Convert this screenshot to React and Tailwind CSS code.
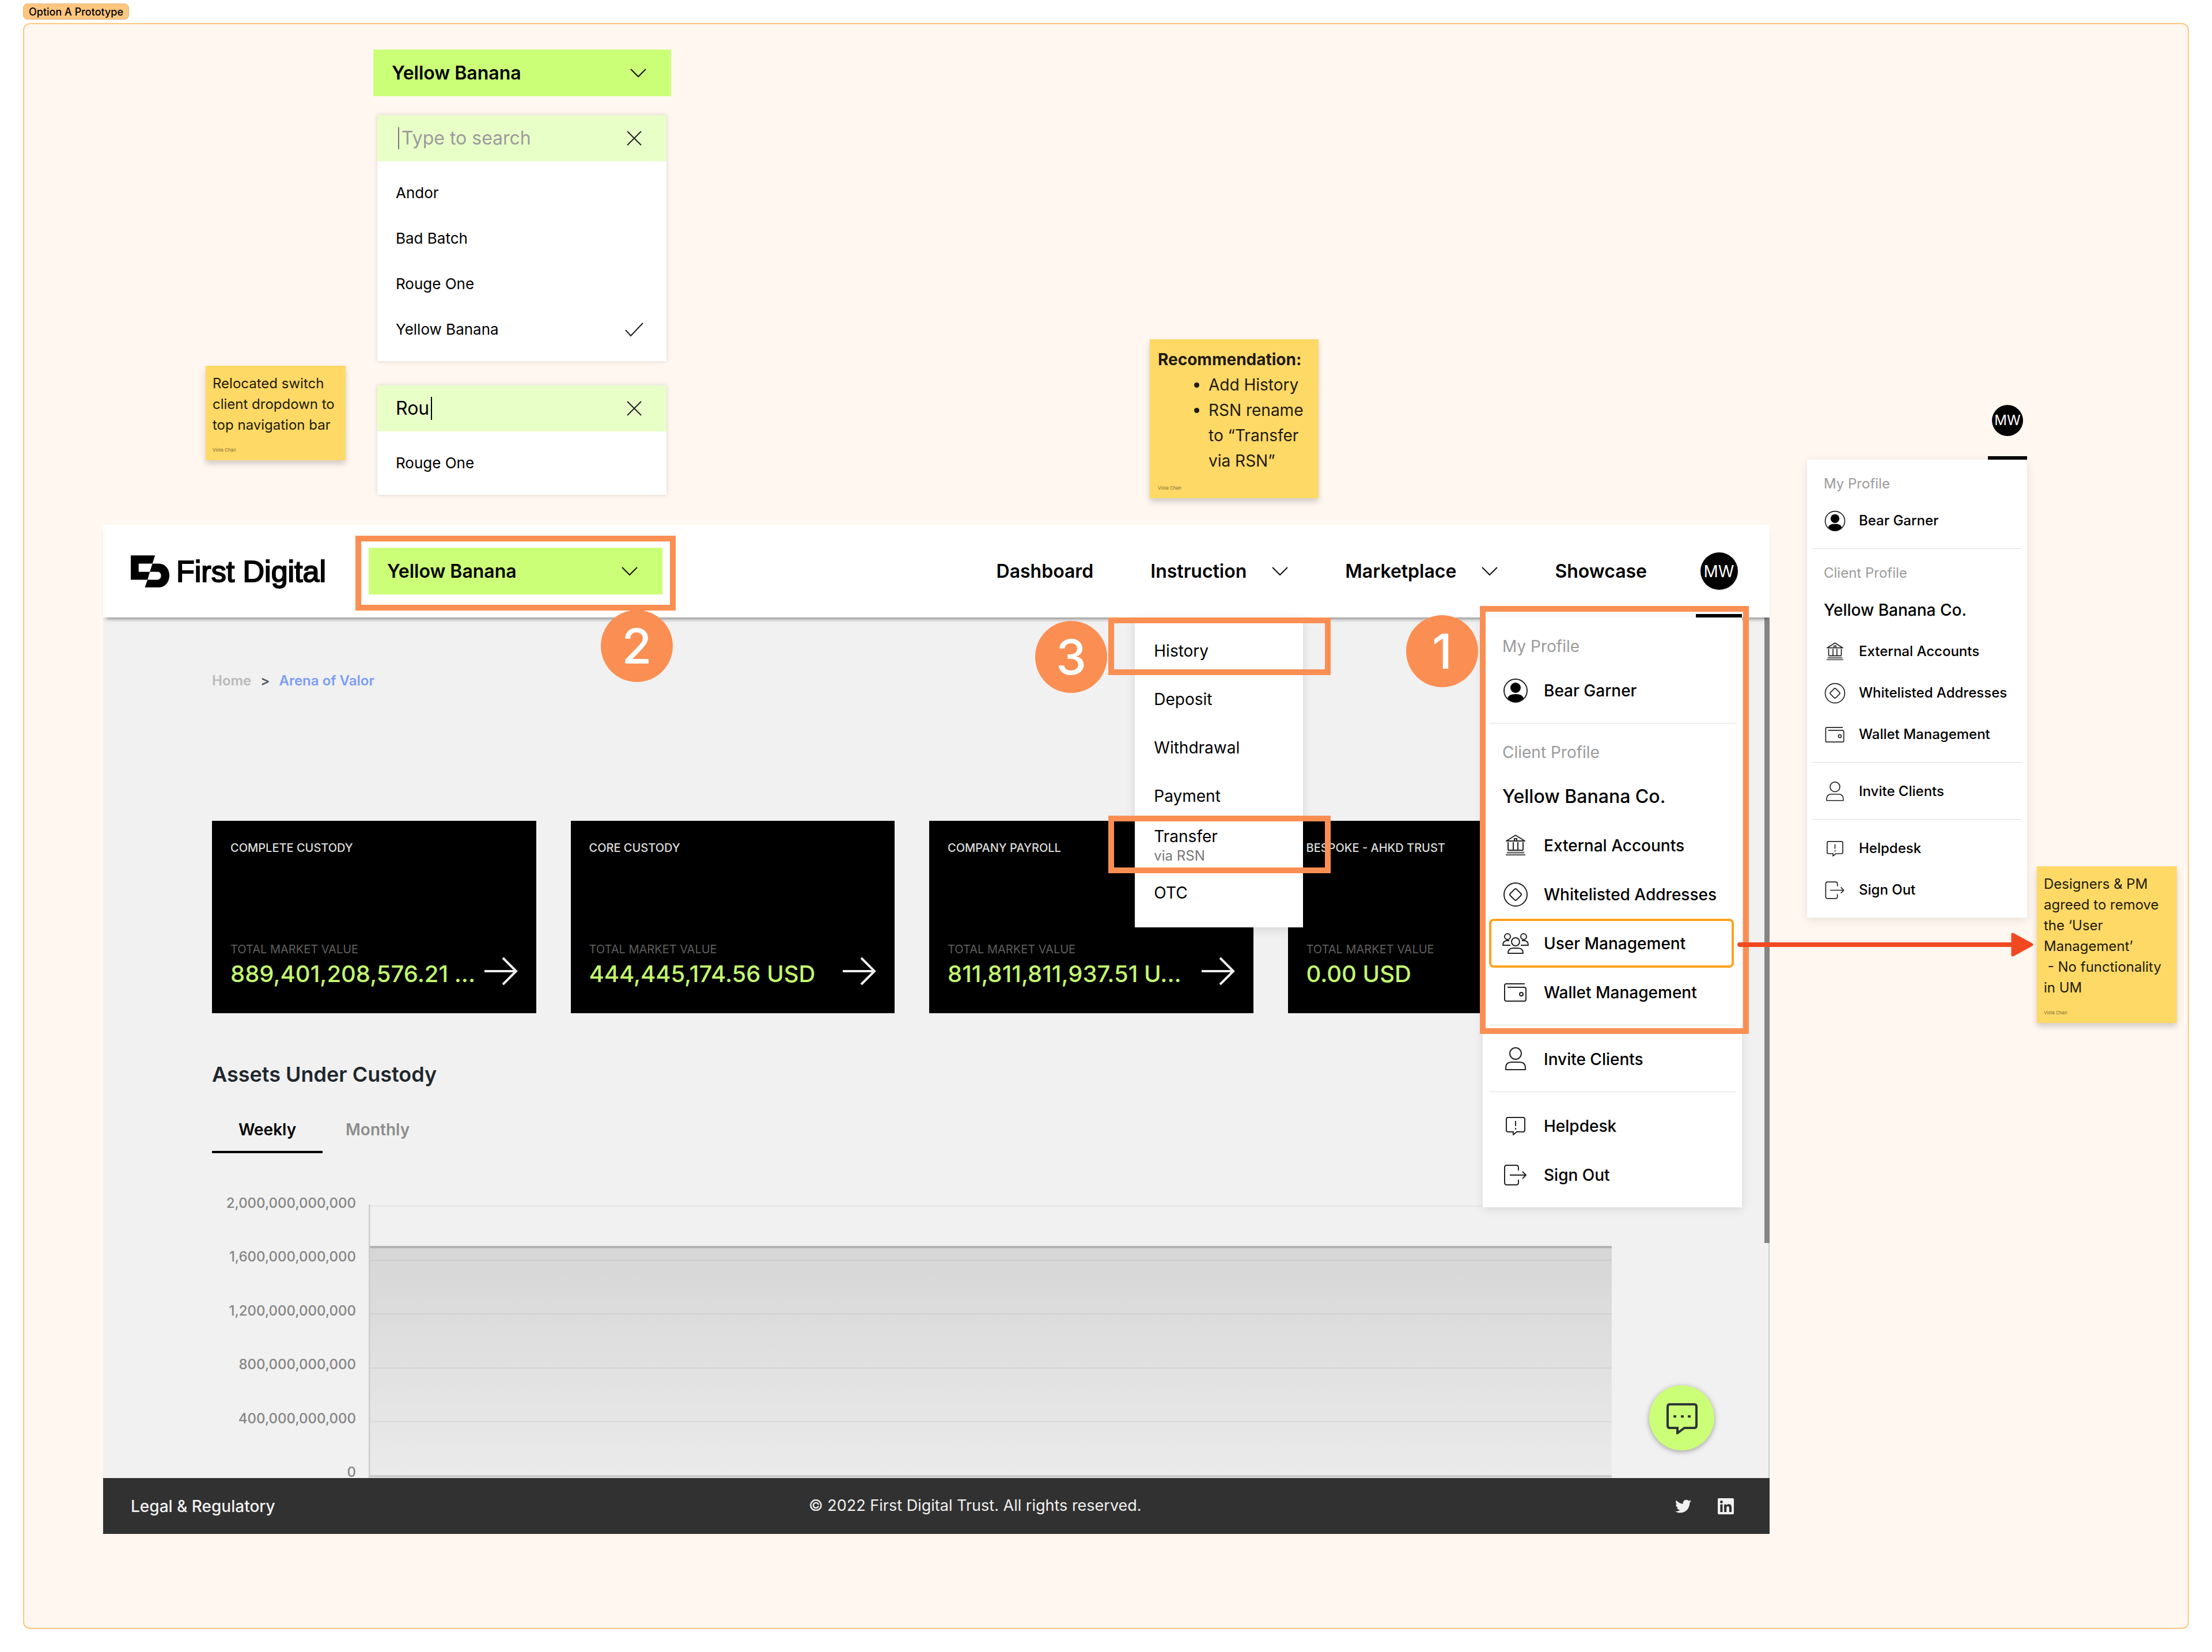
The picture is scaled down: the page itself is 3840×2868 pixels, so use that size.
import React, { useState } from "react";
import { FaLinkedin, FaTwitter } from "react-icons/fa";

const clients = ["Andor", "Bad Batch", "Rouge One", "Yellow Banana"];

const instructions = [
  { label: "History", marked: true },
  { label: "Deposit" },
  { label: "Withdrawal" },
  { label: "Payment" },
  { label: "Transfer", note: "via RSN", marked: true },
  { label: "OTC" },
];

const accounts = [
  { name: "COMPLETE CUSTODY", value: "889,401,208,576.21 ..." },
  { name: "CORE CUSTODY", value: "444,445,174.56 USD" },
  { name: "COMPANY PAYROLL", value: "811,811,811,937.51 U..." },
  { name: "BESPOKE - AHKD TRUST", value: "0.00 USD" },
];

const axisLabels = [
  "2,000,000,000,000",
  "1,600,000,000,000",
  "1,200,000,000,000",
  "800,000,000,000",
  "400,000,000,000",
  "0",
];

export default function App() {
  return (
    <div className="flex min-h-screen flex-col bg-white px-[40px] pt-[6px] pb-[40px] font-['Inter',sans-serif] text-black">
      <div className="mb-[6px] flex h-[28px] items-center self-start rounded-lg border border-[#e5b27a] bg-[#ffc680] px-[9px] text-[18px] font-medium">
        Option A Prototype
      </div>

      <section className="relative flex-1 overflow-hidden rounded-xl border-2 border-[#ffc680] bg-[#fff7f0]">
        <div className="absolute top-[44px] left-[606px] w-[517px]">
          <ClientSelect />
        </div>
        <div className="absolute top-[158px] left-[613px] w-[502px]">
          <ClientSearch />
        </div>
        <div className="absolute top-[627px] left-[613px] w-[502px]">
          <ClientSearch initialQuery="Rou" />
        </div>

        <div className="absolute top-[593px] left-[315px]">
          <StickyNote className="w-[243px] px-[12px] pt-[13px] text-[24px] leading-[36px]">
            <p>Relocated switch client dropdown to top navigation bar</p>
          </StickyNote>
        </div>

        <div className="absolute top-[547px] left-[1954px]">
          <StickyNote className="w-[293px] px-[14px] pt-[13px] text-[28px] leading-[44px]">
            <p className="font-bold">Recommendation:</p>
            <ul className="list-disc pl-[88px]">
              <li>Add History</li>
              <li>RSN rename to “Transfer via RSN”</li>
            </ul>
          </StickyNote>
        </div>

        <div className="absolute top-[869px] left-[137px] w-[2893px]">
          <Dashboard />
        </div>

        <StepBadge className="top-[1017px] left-[1001px]">2</StepBadge>
        <StepBadge className="top-[1036px] left-[1755px]">3</StepBadge>
        <StepBadge className="top-[1026px] left-[2399px]">1</StepBadge>

        <div className="absolute top-[661px] left-[3095px] flex w-[382px] flex-col items-end">
          <div className="flex w-[68px] flex-col items-center">
            <Avatar className="size-[54px] text-[24px]" />
            <div className="mt-[35px] h-[6px] w-full bg-black" />
          </div>
          <ProfileMenu compact />
        </div>

        <div className="absolute top-[1462px] left-[3494px]">
          <StickyNote className="w-[243px] px-[12px] pt-[13px] text-[24px] leading-[36px]">
            <p className="whitespace-pre-line">
              {"Designers & PM agreed to remove the ‘User Management’\n\u00a0- No functionality in UM"}
            </p>
          </StickyNote>
        </div>

        <svg className="absolute top-[1573px] left-[2970px] z-20 h-[50px] w-[520px]" viewBox="0 0 520 50" fill="none">
          <path d="M8 25H484" stroke="#f24822" strokeWidth="8" strokeLinecap="round" />
          <path d="M482 7L515 25L482 43Z" fill="#f24822" stroke="#f24822" strokeWidth="5" strokeLinejoin="round" />
        </svg>
      </section>
    </div>
  );
}

function ClientSelect() {
  return (
    <div className="relative h-[81px] w-full">
      <select
        aria-label="Client"
        defaultValue="Yellow Banana"
        className="h-full w-full appearance-none bg-[#ccff78] pr-[80px] pl-[32px] text-[32px] font-semibold"
      >
        {clients.map((client) => (
          <option key={client}>{client}</option>
        ))}
      </select>
      <Chevron className="pointer-events-none absolute top-[32px] right-[43px]" />
    </div>
  );
}

function ClientSearch({ initialQuery = "" }) {
  const [query, setQuery] = useState(initialQuery);
  const matches = clients.filter((client) => client.toLowerCase().includes(query.toLowerCase()));

  return (
    <div className="bg-white shadow-[0_0_8px_rgba(0,0,0,0.15)]">
      <div className="flex h-[80px] items-center bg-[#e9ffc8] pr-[42px] pl-[32px] text-[32px]">
        {!query && <span className="mr-[4px] ml-[4px] h-[38px] w-[2px] bg-[#777777]" />}
        <input
          type="text"
          aria-label="Search clients"
          value={query}
          onChange={(event) => setQuery(event.target.value)}
          placeholder="Type to search"
          className="field-sizing-content bg-transparent placeholder-[#9b9b9b] outline-none"
        />
        {query && <span className="ml-[3px] h-[40px] w-[2px] bg-black" />}
        <button type="button" aria-label="Clear search" onClick={() => setQuery("")} className="ml-auto">
          <svg className="size-[28px]" viewBox="0 0 28 28" fill="none" stroke="#222" strokeWidth="2">
            <path d="M2 2L26 26M26 2L2 26" />
          </svg>
        </button>
      </div>
      <ul className="pt-[15px] pb-[16px] text-[26px]">
        {matches.map((client) => (
          <li key={client} className="flex h-[79px] items-center justify-between pr-[39px] pl-[32px]">
            {client}
            {client === "Yellow Banana" && (
              <svg className="h-[26px] w-[34px]" viewBox="0 0 34 26" fill="none" stroke="#222" strokeWidth="2">
                <path d="M2 14L11 24L32 2" />
              </svg>
            )}
          </li>
        ))}
      </ul>
    </div>
  );
}

function StickyNote({ className, children }) {
  return (
    <div className={`bg-[#ffd966] text-[#1e1a0c] shadow-[0_6px_10px_rgba(0,0,0,0.18)] ${className}`}>
      {children}
      <p className="mt-[20px] pb-[13px] text-[8px] leading-[10px] text-[#7d6c38]">Viola Chan</p>
    </div>
  );
}

function StepBadge({ className, children }) {
  return (
    <div
      className={`absolute z-20 flex size-[125px] items-center justify-center rounded-full bg-[#fb8f53] text-[84px] font-medium text-white ${className}`}
    >
      {children}
    </div>
  );
}

function Avatar({ className }) {
  return (
    <div className={`flex items-center justify-center rounded-full bg-black text-white ${className}`}>MW</div>
  );
}

function Chevron({ className = "" }) {
  return (
    <svg className={`h-[17px] w-[28px] ${className}`} viewBox="0 0 28 17" fill="none" stroke="#111" strokeWidth="2">
      <path d="M1 2L14 15L27 2" />
    </svg>
  );
}

function Dashboard() {
  return (
    <div className="relative">
      <header className="relative z-10 flex h-[161px] items-center bg-white pr-[48px] pl-[48px] shadow-[0_7px_7px_-5px_rgba(0,0,0,0.5)]">
        <a href="#home" className="flex items-center">
          <svg className="mr-[12px] h-[56px] w-[67px]" viewBox="0 0 200 166">
            <path d="M0 0H126L112 43H41V85H99L87 126H0Z" />
            <path d="M112 43H146C178 43 200 70 200 104C200 138 178 166 146 166H73L87 126H138C150 126 157 117 157 105C157 93 150 85 138 85H99Z" />
          </svg>
          <span className="font-['Liberation_Sans',sans-serif] text-[52px] [-webkit-text-stroke:2px_black]">
            First Digital
          </span>
        </a>

        <div className="relative ml-[74px] w-[510px]">
          <ClientSelect />
          <div className="pointer-events-none absolute -inset-x-[23px] -top-[21px] -bottom-[28px] border-[10px] border-[#fb8f53]" />
        </div>

        <nav className="ml-auto flex items-center gap-[99px] self-stretch text-[32px] font-semibold">
          <a href="#dashboard">Dashboard</a>
          <div className="relative flex items-center self-stretch">
            <button type="button" className="flex items-center gap-[44px]">
              Instruction
              <Chevron />
            </button>
            <InstructionMenu />
          </div>
          <button type="button" className="flex items-center gap-[44px]">
            Marketplace
            <Chevron />
          </button>
          <a href="#showcase">Showcase</a>
        </nav>

        <div className="relative ml-[85px] flex w-[80px] items-center justify-center self-stretch">
          <button type="button">
            <Avatar className="size-[65px] text-[28px]" />
          </button>
          <div className="absolute bottom-0 left-0 h-[6px] w-full bg-black" />
          <div className="absolute top-full right-0 w-[450px]">
            <ProfileMenu />
            <div className="pointer-events-none absolute -top-[20px] -right-[12px] -left-[5px] h-[743px] border-[10px] border-[#fb8f53]" />
          </div>
        </div>
      </header>

      <main className="relative h-[1494px] overflow-hidden bg-[#f1f1f1] pt-[94px] pr-[274px] pl-[189px]">
        <nav className="flex h-[32px] items-center gap-[16px] text-[24px] font-semibold">
          <a href="#home" className="text-[#b9b9b9]">
            Home
          </a>
          <span className="text-[#4f575e]">&gt;</span>
          <a href="#arena" className="text-[#7a9ef5]">
            Arena of Valor
          </a>
        </nav>

        <div className="mt-[227px] grid grid-cols-4 gap-[60px]">
          {accounts.map((account) => (
            <AccountCard key={account.name} {...account} />
          ))}
        </div>

        <h2 className="mt-[84px] text-[36px] leading-[44px] font-semibold text-[#20262c]">Assets Under Custody</h2>

        <div className="mt-[41px] flex h-[74px] text-[28px] font-semibold">
          <button type="button" className="w-[192px] border-b-4 border-black pb-[4px]">
            Weekly
          </button>
          <button type="button" className="px-[40px] pb-[8px] text-[#8d8d8d]">
            Monthly
          </button>
        </div>

        <CustodyChart />

        <div className="absolute top-0 right-0 h-[1086px] w-[9px] bg-[#858585]" />
        <div className="absolute top-[1086px] right-0 h-[408px] w-[2px] bg-[#cccccc]" />
        <button
          type="button"
          aria-label="Open chat"
          className="absolute right-[96px] bottom-[48px] flex size-[113px] items-center justify-center rounded-full bg-[#ccff78] shadow-[0_2px_10px_rgba(0,0,0,0.35)]"
        >
          <svg className="h-[56px] w-[56px]" viewBox="0 0 56 56" fill="none" stroke="#2d3436" strokeWidth="4">
            <path d="M7 4H49Q53 4 53 8V41Q53 45 49 45H32L20 54V45H7Q3 45 3 41V8Q3 4 7 4Z" />
            <path d="M13 25H18M26 25H31M38 25H43" />
          </svg>
        </button>
      </main>

      <footer className="flex h-[97px] items-center justify-between bg-[#313131] pr-[60px] pl-[48px] text-[#f1f1f1]">
        <a href="#legal" className="text-[28px] font-medium">
          Legal &amp; Regulatory
        </a>
        <p className="text-[27px]">© 2022 First Digital Trust. All rights reserved.</p>
        <div className="flex items-center gap-[44px]">
          <a href="#twitter" aria-label="Twitter">
            <FaTwitter className="size-[28px]" />
          </a>
          <a href="#linkedin" aria-label="LinkedIn">
            <FaLinkedin className="size-[32px]" />
          </a>
        </div>
      </footer>
    </div>
  );
}

function InstructionMenu() {
  return (
    <ul className="absolute top-full -left-[27px] w-[292px] bg-white pt-[16px] pb-[18px] text-[28px] font-normal shadow-[0_4px_16px_rgba(0,0,0,0.12)]">
      {instructions.map((item) => (
        <li
          key={item.label}
          className={`relative flex h-[84px] flex-col justify-center px-[33px] leading-[34px] ${item.note ? "pt-[6px]" : ""}`}
        >
          <a href="#instruction">{item.label}</a>
          {item.note && <span className="text-[24px] text-[#777777]">{item.note}</span>}
          {item.marked && (
            <div
              className={`pointer-events-none absolute -right-[48px] -left-[46px] border-[10px] border-[#fb8f53] ${item.note ? "-top-[8px] -bottom-[8px]" : "-top-[16px] bottom-0"}`}
            />
          )}
        </li>
      ))}
    </ul>
  );
}

function AccountCard({ name, value }) {
  return (
    <article className="flex h-[334px] flex-col justify-between bg-black px-[32px] pt-[34px] pb-[38px]">
      <h3 className="text-[20px] leading-[26px] font-medium text-[#dddddd]">{name}</h3>
      <div>
        <p className="text-[20px] leading-[26px] text-[#5f5f5f]">TOTAL MARKET VALUE</p>
        <div className="flex items-start justify-between">
          <p className="text-[40px] leading-[60px] font-medium whitespace-nowrap text-[#c3f76f]">{value}</p>
          <svg className="h-[50px] w-[58px] shrink-0" viewBox="0 0 58 50" fill="none" stroke="#eee" strokeWidth="4">
            <path d="M0 25H55M32 2L55 25L32 48" />
          </svg>
        </div>
      </div>
    </article>
  );
}

function CustodyChart() {
  return (
    <div className="mt-[71px] flex h-[499px]">
      <ul className="flex w-[250px] flex-col justify-between text-right text-[24px] leading-[32px] font-medium text-[#858585]">
        {axisLabels.map((label) => (
          <li key={label}>{label}</li>
        ))}
      </ul>
      <svg
        className="mt-[18px] ml-[22px] h-[476px] min-w-0 flex-1"
        viewBox="0 0 2157 476"
        preserveAspectRatio="none"
        fill="none"
      >
        <defs>
          <linearGradient id="custody" x1="0" y1="0" x2="0" y2="1">
            <stop offset="0" stopColor="#d6d6d6" />
            <stop offset="1" stopColor="#ebebeb" />
          </linearGradient>
        </defs>
        <rect x="0" y="73" width="2157" height="403" fill="url(#custody)" />
        <path d="M0 3H2157" stroke="#e7e7e7" strokeWidth="3" />
        <path d="M0 97H2157M0 190H2157M0 284H2157M0 377H2157" stroke="#000" strokeOpacity="0.05" strokeWidth="2" />
        <path d="M0 74H2157" stroke="#b2b2b2" strokeWidth="4" />
        <path d="M1 0V476" stroke="#cccccc" strokeWidth="3" />
        <path d="M0 472H2157" stroke="#cacaca" strokeWidth="4" />
      </svg>
    </div>
  );
}

function ProfileMenu({ compact = false }) {
  const section = compact ? "mx-[9px] px-[20px] pt-[14px] pb-[12px]" : "mx-[11px] px-[23px] pt-[16px] pb-[14px]";
  const heading = compact ? "h-[56px] text-[24px]" : "h-[68px] text-[28px]";
  const client = compact ? "h-[72px] text-[28px]" : "h-[85px] text-[32px]";

  return (
    <div
      className={`w-full bg-white font-medium shadow-[0_4px_16px_rgba(0,0,0,0.1)] ${compact ? "text-[24px]" : "text-[28px]"}`}
    >
      <section className={`border-b border-[#dddddd] ${section}`}>
        <h3 className={`flex items-center font-normal text-[#9b9b9b] ${heading}`}>My Profile</h3>
        <MenuRow compact={compact} icon={<ProfileIcon />} label="Bear Garner" />
      </section>
      <section className={`border-b border-[#dddddd] ${section}`}>
        <h3 className={`flex items-center font-normal text-[#9b9b9b] ${heading}`}>Client Profile</h3>
        <p className={`flex items-center ${client}`}>Yellow Banana Co.</p>
        <MenuRow compact={compact} icon={<BankIcon />} label="External Accounts" />
        <MenuRow compact={compact} icon={<AddressIcon />} label="Whitelisted Addresses" />
        {!compact && <MenuRow icon={<UsersIcon />} label="User Management" marked />}
        <MenuRow compact={compact} icon={<WalletIcon />} label="Wallet Management" />
      </section>
      <section className={`border-b border-[#dddddd] ${section}`}>
        <MenuRow compact={compact} icon={<PersonIcon />} label="Invite Clients" />
      </section>
      <section className={section}>
        <MenuRow compact={compact} icon={<HelpIcon />} label="Helpdesk" />
        <MenuRow compact={compact} icon={<SignOutIcon />} label="Sign Out" />
      </section>
    </div>
  );
}

function MenuRow({ icon, label, compact = false, marked = false }) {
  return (
    <a
      href="#profile"
      className={`relative flex items-center whitespace-nowrap ${compact ? "h-[72px] gap-[22px]" : "h-[85px] gap-[26px]"}`}
    >
      <svg
        className={`shrink-0 ${compact ? "size-[39px]" : "size-[46px]"}`}
        viewBox="0 0 46 46"
        fill="none"
        stroke="#222"
        strokeWidth="2"
        strokeLinejoin="round"
      >
        {icon}
      </svg>
      {label}
      {marked && <span className="absolute inset-y-0 -right-[20px] -left-[23px] rounded-lg border-4 border-[#ffa21f]" />}
    </a>
  );
}

function ProfileIcon() {
  return (
    <>
      <circle cx="23" cy="23" r="20" />
      <circle cx="23" cy="18" r="9" fill="#000" stroke="none" />
      <path d="M9 36Q11 29 23 29Q35 29 37 36Q31 43 23 43Q15 43 9 36Z" fill="#000" stroke="none" />
    </>
  );
}

function BankIcon() {
  return (
    <>
      <path d="M7 15L23 5L39 15ZM10 17V31M19 17V31M27 17V31M36 17V31M10 31H36" />
      <path d="M21 14V11H25V14" />
      <path d="M8 35H38M6 39H40" stroke="#777" strokeWidth="3" />
    </>
  );
}

function AddressIcon() {
  return (
    <>
      <circle cx="23" cy="23" r="20" />
      <path d="M21 14Q23 12 25 14L32 21Q34 23 32 25L25 32Q23 34 21 32L14 25Q12 23 14 21Z" />
    </>
  );
}

function UsersIcon() {
  return (
    <>
      <circle cx="9" cy="11" r="5" />
      <circle cx="37" cy="11" r="5" />
      <circle cx="23" cy="20" r="7" />
      <path d="M10 40Q10 31 19 31H27Q36 31 36 40Z" />
      <path d="M14 26H1Q1 19 7 18H12M32 26H45Q45 19 39 18H34" />
    </>
  );
}

function WalletIcon() {
  return (
    <>
      <path d="M39 8H7Q4 8 4 11V35Q4 38 7 38H38Q41 38 41 35V17Q41 14 38 14H9" />
      <circle cx="33" cy="26" r="3" />
    </>
  );
}

function PersonIcon() {
  return (
    <>
      <circle cx="23" cy="13" r="10" />
      <path d="M6 41V38Q6 28 16 28H30Q40 28 40 38V41Z" />
    </>
  );
}

function HelpIcon() {
  return (
    <>
      <path d="M10 8H36Q39 8 39 11V30Q39 33 36 33H25L19 38V33H10Q7 33 7 30V11Q7 8 10 8Z" />
      <path d="M23 14V23M23 26V29" />
    </>
  );
}

function SignOutIcon() {
  return (
    <>
      <path d="M28 15V10Q28 6 24 6H8Q4 6 4 10V36Q4 40 8 40H24Q28 40 28 36V31" />
      <path d="M13 23H41M35 17L41 23L35 29" />
    </>
  );
}
